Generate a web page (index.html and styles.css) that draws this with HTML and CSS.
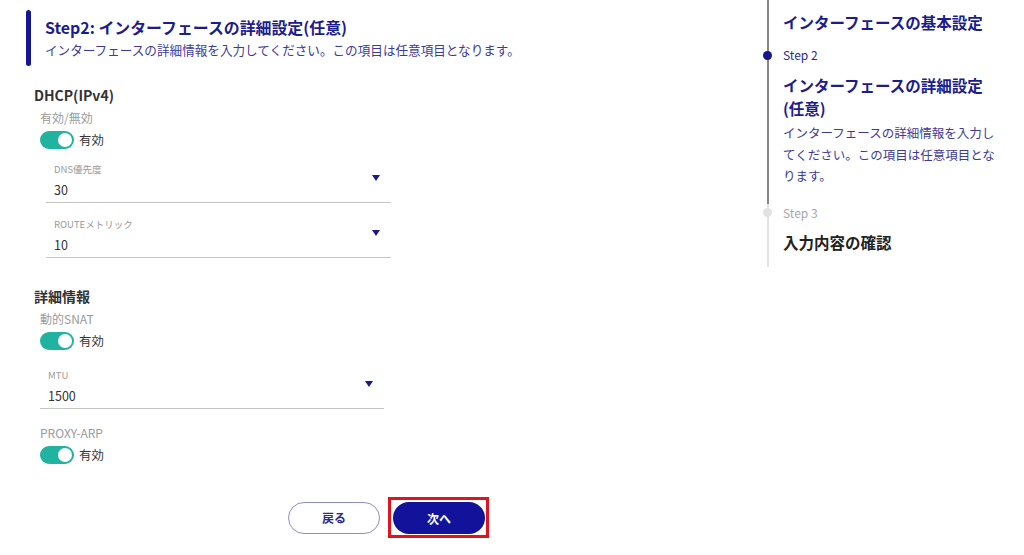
FILE: index.html
```html
<!DOCTYPE html>
<html lang="ja">
<head>
<meta charset="utf-8">
<link rel="stylesheet" href="styles.css">
</head>
<body>
<div class="page">
  <main class="main">
    <div class="heading">
      <div class="heading-bar"></div>
      <div class="heading-text">
        <h1 class="heading-title">Step2: インターフェースの詳細設定(任意)</h1>
        <p class="heading-sub">インターフェースの詳細情報を入力してください。この項目は任意項目となります。</p>
      </div>
    </div>

    <section class="section">
      <h2 class="section-title">DHCP(IPv4)</h2>
      <div class="item-label">有効/無効</div>
      <div class="toggle-row">
        <span class="toggle"><span class="knob"></span></span>
        <span class="toggle-text">有効</span>
      </div>
      <div class="fields fields-nested">
        <div class="field">
          <div class="field-body">
            <div class="field-label">DNS優先度</div>
            <div class="field-value">30</div>
          </div>
          <span class="arrow"></span>
        </div>
        <div class="field">
          <div class="field-body">
            <div class="field-label">ROUTEメトリック</div>
            <div class="field-value">10</div>
          </div>
          <span class="arrow"></span>
        </div>
      </div>
    </section>

    <section class="section section-2">
      <h2 class="section-title">詳細情報</h2>
      <div class="item-label">動的SNAT</div>
      <div class="toggle-row">
        <span class="toggle"><span class="knob"></span></span>
        <span class="toggle-text">有効</span>
      </div>
      <div class="fields fields-flat">
        <div class="field">
          <div class="field-body">
            <div class="field-label">MTU</div>
            <div class="field-value">1500</div>
          </div>
          <span class="arrow"></span>
        </div>
      </div>
      <div class="item-label item-label-gap">PROXY-ARP</div>
      <div class="toggle-row">
        <span class="toggle"><span class="knob"></span></span>
        <span class="toggle-text">有効</span>
      </div>
    </section>

    <div class="actions">
      <button class="btn btn-back">戻る</button>
      <div class="highlight"><button class="btn btn-next">次へ</button></div>
    </div>
  </main>

  <aside class="steps">
    <div class="step step-done step-first">
      <div class="step-title">インターフェースの基本設定</div>
    </div>
    <div class="step step-current">
      <span class="dot dot-active"></span>
      <div class="step-label">Step 2</div>
      <div class="step-title">インターフェースの詳細設定(任意)</div>
      <div class="step-desc">インターフェースの詳細情報を入力してください。この項目は任意項目となります。</div>
    </div>
    <div class="step step-todo">
      <span class="dot dot-todo"></span>
      <div class="step-label step-label-todo">Step 3</div>
      <div class="step-title step-title-todo">入力内容の確認</div>
    </div>
  </aside>
</div>
</body>
</html>
```

FILE: styles.css
```css
* { box-sizing: border-box; }
html, body { margin: 0; padding: 0; background: #fff; }
body {
  font-family: "Noto Sans CJK JP", "Noto Sans", sans-serif;
  color: #333;
  width: 1024px;
  height: 555px;
  overflow: hidden;
}
.page { display: flex; align-items: flex-start; }

.main { width: 767px; flex: none; }

.heading {
  display: flex;
  margin: 10px 0 0 26px;
  height: 56px;
}
.heading-bar {
  width: 5px;
  background: #15158f;
  border-radius: 3px;
  flex: none;
}
.heading-text { padding: 6px 0 0 14px; }
.heading-title {
  margin: 0;
  font-size: 15.9px;
  line-height: 23px;
  font-weight: 700;
  color: #1c1c8e;
}
.heading-sub {
  margin: 2px 0 0;
  font-size: 12.6px;
  line-height: 18px;
  color: #3e3a98;
}

.section { padding-left: 34px; margin-top: 19px; }
.section-2 { margin-top: 28px; }
.section-title {
  margin: 0;
  font-size: 14px;
  line-height: 20px;
  font-weight: 700;
  color: #333;
}
.item-label {
  margin: 4px 0 0 6px;
  font-size: 12px;
  line-height: 18px;
  color: #9a9a9a;
}
.item-label-gap { margin-top: 15px; }
.toggle-row {
  display: flex;
  align-items: center;
  gap: 5px;
  margin: 4px 0 0 6px;
  height: 18px;
}
.toggle {
  width: 34px;
  height: 18px;
  border-radius: 9px;
  background: #1fb3a0;
  display: flex;
  align-items: center;
  justify-content: flex-end;
  padding-right: 2px;
}
.knob {
  width: 14px;
  height: 14px;
  border-radius: 50%;
  background: #fff;
}
.toggle-text { font-size: 12.4px; line-height: 18px; color: #333; }

.fields { display: flex; flex-direction: column; gap: 10px; }
.fields-nested { margin: 9px 0 0 12px; width: 345px; }
.fields-flat { margin: 14px 0 0 6px; width: 344px; }
.field {
  display: flex;
  align-items: center;
  padding: 4px 11px 2px 8px;
  border-bottom: 1px solid #c4c4c4;
  height: 45px;
}
.field-body { flex: 1; }
.field-label {
  font-size: 9.5px;
  line-height: 14px;
  color: #9a9a9a;
}
.field-value {
  margin-top: 4px;
  font-size: 12.5px;
  line-height: 20px;
  color: #333;
}
.arrow {
  width: 0;
  height: 0;
  border-left: 4px solid transparent;
  border-right: 4px solid transparent;
  border-top: 6px solid #1a1a8a;
  margin-bottom: 6px;
}

.actions {
  display: flex;
  justify-content: center;
  align-items: center;
  gap: 8px;
  margin-top: 33px;
  padding-left: 10px;
}
.btn {
  font-family: inherit;
  font-size: 12px;
  font-weight: 700;
  width: 92px;
  height: 32px;
  border-radius: 16px;
  cursor: pointer;
}
.btn-back {
  background: #fff;
  color: #2a2a90;
  border: 1px solid #8f8cc9;
}
.btn-next {
  background: #12129a;
  color: #fff;
  border: none;
  display: block;
}
.highlight {
  border: 3px solid #e0141e;
  padding: 2px 1px 1px 2px;
}

.steps {
  width: 240px;
  flex: none;
}
.step {
  position: relative;
  border-left: 2px solid #858585;
  padding-left: 14px;
  width: 232px;
}
.step-first { padding-top: 10.5px; padding-bottom: 12.5px; }
.step-current { padding-bottom: 17px; }
.step-todo { border-left-color: #e2e2e2; padding-bottom: 13px; }
.step-label {
  font-size: 12px;
  line-height: 18px;
  color: #2a2a90;
  margin-bottom: 9.5px;
}
.step-label-todo { color: #a8a8a8; }
.step-title {
  font-size: 15.5px;
  line-height: 23px;
  font-weight: 700;
  color: #1c1c8e;
  width: 220px;
}
.step-title-todo { color: #222; }
.step-desc {
  font-size: 12.5px;
  line-height: 21.5px;
  color: #3e3a98;
  width: 216px;
  margin-top: 2.5px;
}
.dot {
  position: absolute;
  left: -6.5px;
  top: 4.5px;
  width: 9px;
  height: 9px;
  border-radius: 50%;
}
.dot-active { background: #15158f; }
.dot-todo { background: #e2e2e2; }
```
